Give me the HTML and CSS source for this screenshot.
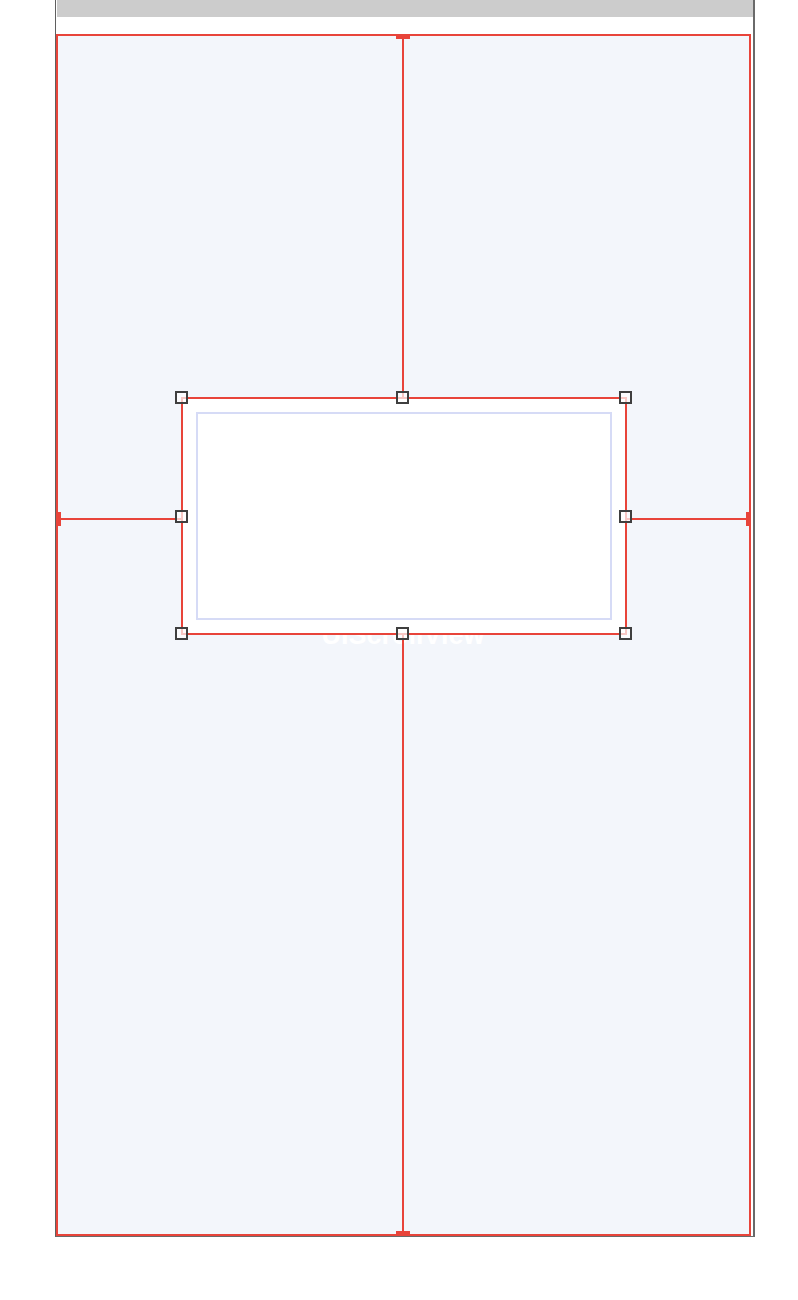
FILE: index.html
```html
<!DOCTYPE html>
<html lang="en">

<head>
    <meta charset="UTF-8">
    <meta name="viewport" content="width=device-width, initial-scale=1.0">
    <title>Constraint Editor</title>
    <link rel="stylesheet" href="styles.css">
</head>

<body>
    <div class="device">
        <div class="status-bar"></div>
        <div class="gap"></div>
        <div class="canvas">
            <!-- label sits under the selected view -->
            <div class="view-label">UIScrollView</div>

            <!-- constraint lines from the view to the superview edges -->
            <div class="line line-top"><span class="cap cap-h cap-start"></span></div>
            <div class="line line-bottom"><span class="cap cap-h cap-end"></span></div>
            <div class="line line-left"><span class="cap cap-v cap-start"></span></div>
            <div class="line line-right"><span class="cap cap-v cap-end"></span></div>

            <div class="selected-view">
                <div class="content-rect"></div>
                <span class="handle h-tl"></span>
                <span class="handle h-tc"></span>
                <span class="handle h-tr"></span>
                <span class="handle h-ml"></span>
                <span class="handle h-mr"></span>
                <span class="handle h-bl"></span>
                <span class="handle h-bc"></span>
                <span class="handle h-br"></span>
            </div>
        </div>
    </div>
</body>

</html>
```

FILE: styles.css
```css
body {
    font-family: "Liberation Sans", Arial, sans-serif;
    margin: 0;
    background-color: #fff;
}

.device {
    margin-left: 55px;
    width: 697px;
    border-left: 1px solid #5f5f5f;
    border-right: 2px solid #6a6a6a;
    border-bottom: 1px solid #6a6a6a;
    background-color: #fff;
}

.status-bar {
    height: 17px;
    margin-left: 1px;
    background-color: #cccccc;
}

.gap {
    height: 17px;
}

.canvas {
    position: relative;
    width: 691px;
    height: 1198px;
    border: 2px solid #e8443a;
    background-color: #f3f6fb;
}

.view-label {
    position: absolute;
    left: 245px;
    top: 586px;
    width: 200px;
    text-align: center;
    font-size: 27px;
    font-weight: bold;
    line-height: 1;
    color: #fff;
}

.line {
    position: absolute;
    background-color: #e8443a;
}

.line-top {
    left: 344px;
    top: 0;
    width: 2px;
    height: 361px;
}

.line-bottom {
    left: 344px;
    top: 599px;
    width: 2px;
    height: 599px;
}

.line-left {
    left: 0;
    top: 482px;
    width: 123px;
    height: 2px;
}

.line-right {
    left: 569px;
    top: 482px;
    width: 122px;
    height: 2px;
}

.cap {
    position: absolute;
    background-color: #e8443a;
}

.cap-h {
    left: -6px;
    width: 14px;
    height: 3px;
}

.cap-h.cap-start {
    top: 0;
}

.cap-h.cap-end {
    bottom: 0;
}

.cap-v {
    top: -6px;
    width: 3px;
    height: 14px;
}

.cap-v.cap-start {
    left: 0;
}

.cap-v.cap-end {
    right: 0;
}

.selected-view {
    position: absolute;
    left: 123px;
    top: 361px;
    width: 416px;
    height: 208px;
    padding: 13px;
    border: 2px solid #e8443a;
    background-color: #fff;
}

.content-rect {
    box-sizing: border-box;
    width: 100%;
    height: 100%;
    border: 2px solid #d6dbf6;
}

.handle {
    position: absolute;
    box-sizing: border-box;
    width: 13px;
    height: 13px;
    border: 2px solid #3f3f3f;
    background-color: rgba(255, 255, 255, 0.7);
}

.h-tl { left: -8px; top: -8px; }
.h-tc { left: 213px; top: -8px; }
.h-tr { left: 436px; top: -8px; }
.h-ml { left: -8px; top: 111px; }
.h-mr { left: 436px; top: 111px; }
.h-bl { left: -8px; top: 228px; }
.h-bc { left: 213px; top: 228px; }
.h-br { left: 436px; top: 228px; }
```
